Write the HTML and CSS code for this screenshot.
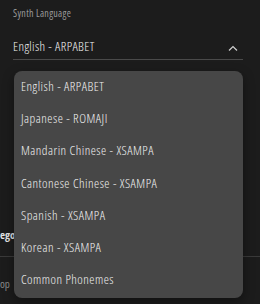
FILE: index.html
```html
<!DOCTYPE html>
<html lang="en">
	<head>
		<meta charset="UTF-8" />
		<meta name="viewport" content="width=device-width, initial-scale=1.0" />
		<title>Synth Language</title>
		<link rel="stylesheet" href="styles.css">
	</head>
	<body>
		<main class="panel">
			<div class="field">
				<label class="label">Synth Language</label>
				<div class="select">
					<span class="value">English - ARPABET</span>
					<svg class="chevron" width="10" height="6" viewBox="0 0 10 6">
						<path d="M1 5.5 L5 1.5 L9 5.5" fill="none" stroke="#cfcfcf" stroke-width="1.2" />
					</svg>
				</div>

				<ul class="menu">
					<li>English - ARPABET</li>
					<li>Japanese - ROMAJI</li>
					<li>Mandarin Chinese - XSAMPA</li>
					<li>Cantonese Chinese - XSAMPA</li>
					<li>Spanish - XSAMPA</li>
					<li>Korean - XSAMPA</li>
					<li>Common Phonemes</li>
				</ul>
			</div>

			<div class="row bold">ego</div>
			<div class="row muted">op</div>
		</main>
	</body>
</html>
```

FILE: styles.css
```css
* {
	padding: 0;
	margin: 0;
	box-sizing: border-box;
}
ul {
	list-style: none;
}

body {
	background-color: #1c1c1c;
	font-family: "Open Sans", "Liberation Sans", sans-serif;
	font-stretch: 75%;
	color: #e8e8e8;
	height: 304px;
	overflow: hidden;
}

.panel {
	padding-top: 6px;
}

.field {
	position: relative;
	padding: 0 17px 0 13px;
}

.label {
	display: block;
	font-size: 10px;
	line-height: 15px;
	letter-spacing: 0.3px;
	color: #9a9a9a;
}

.select {
	display: flex;
	align-items: center;
	justify-content: space-between;
	height: 39px;
	padding: 11px 5px 0 0;
	border-bottom: 1px solid #4a4a4a;
}
.value {
	font-size: 13px;
	font-weight: 300;
	letter-spacing: 0.4px;
	color: #f2f2f2;
}
.chevron {
	margin-top: 5px;
}

.menu {
	position: absolute;
	top: 65px;
	left: 14px;
	width: 229px;
	padding: 0 0 2px;
	background-color: #474747;
	border-radius: 8px;
	box-shadow: 0 4px 12px rgba(0, 0, 0, 0.4);
	z-index: 2;
}
.menu li {
	height: 32.2px;
	line-height: 31px;
	padding-left: 7px;
	font-size: 13px;
	font-weight: 300;
	letter-spacing: 0.5px;
	color: #f0f0f0;
}

.row {
	font-size: 11px;
}
.bold {
	margin-top: 167px;
	font-weight: bold;
	color: #e4e4e4;
	height: 30px;
	border-bottom: 1px solid #3a3a3a;
}
.muted {
	padding-top: 19px;
	color: #8a8a8a;
}
```
